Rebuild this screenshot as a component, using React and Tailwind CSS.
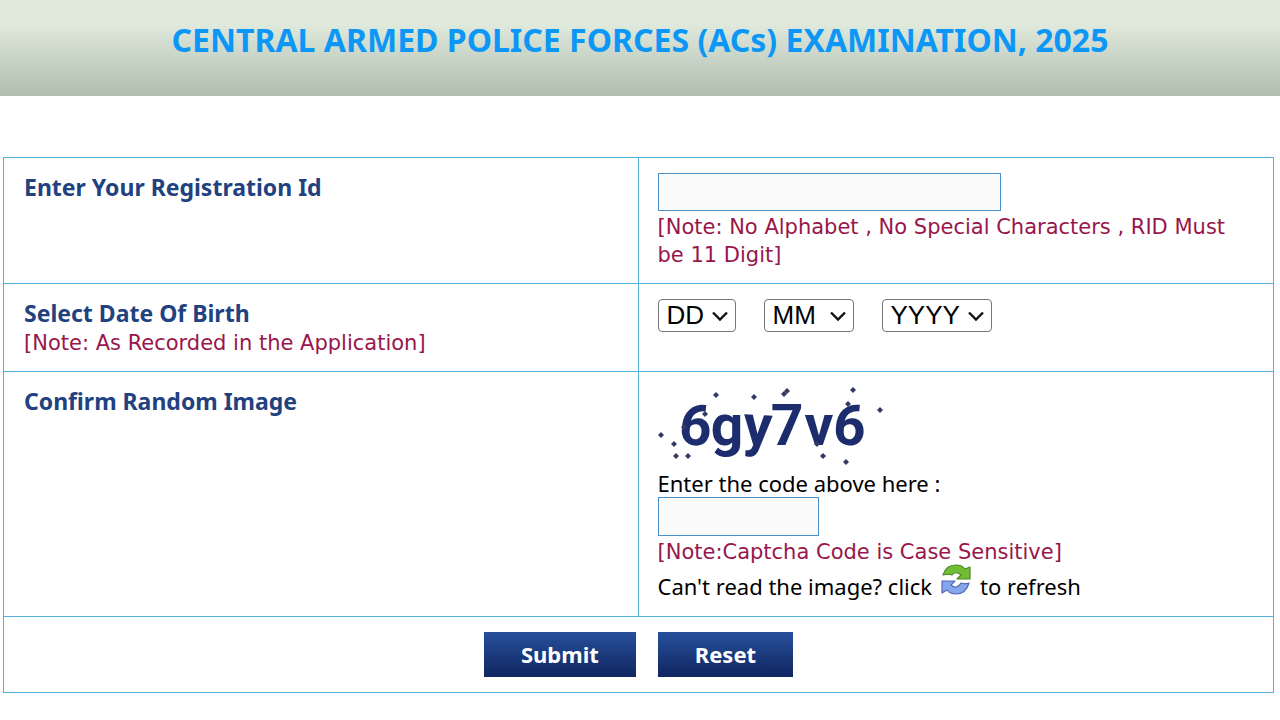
const DAYS = Array.from({ length: 31 }, (_, i) => String(i + 1).padStart(2, "0"));
const MONTHS = Array.from({ length: 12 }, (_, i) => String(i + 1).padStart(2, "0"));
const YEARS = Array.from({ length: 20 }, (_, i) => String(1990 + i));

const CAPTCHA_CHARS = [
  { char: "6", x: 38, angle: 6 },
  { char: "g", x: 69, angle: 0 },
  { char: "y", x: 100, angle: 3 },
  { char: "7", x: 129, angle: 0 },
  { char: "v", x: 161, angle: 0 },
  { char: "6", x: 192, angle: 5 },
];

const CAPTCHA_DOTS = [
  [3, 48], [16, 57], [18, 69], [30, 69], [26, 40], [47, 27], [58, 8], [96, 10],
  [126, 7], [129, 4], [159, 57], [165, 69], [195, 3], [222, 23], [188, 75], [190, 17],
];

function Note({ children }) {
  return (
    <p className="mt-px font-['DejaVu_Sans',sans-serif] text-[21px] leading-7 text-[#98164b]">
      {children}
    </p>
  );
}

function FieldRow({ children, htmlFor, label, note }) {
  return (
    <div className="grid grid-cols-2 border-b border-[#55b1dc]">
      <div className="border-r border-[#55b1dc] px-5 pb-3.5 pt-[15px]">
        <label className="block text-[23px] font-bold leading-[29px] text-[#21417f]" htmlFor={htmlFor}>
          {label}
        </label>
        {note ? <Note>{note}</Note> : null}
      </div>
      <div className="px-[19px] pb-3.5 pt-[15px]">{children}</div>
    </div>
  );
}

function DateSelect({ className, id, label, options, placeholder }) {
  return (
    <div className={`relative h-[33px] ${className}`}>
      <select
        aria-label={label}
        className="h-full w-full appearance-none rounded-[4px] border border-[#767676] bg-white pl-2 font-['Liberation_Sans',sans-serif] text-[26px] leading-[31px] text-black"
        defaultValue=""
        id={id}
      >
        <option value="">{placeholder}</option>
        {options.map((option) => (
          <option key={option} value={option}>{option}</option>
        ))}
      </select>
      <svg
        aria-hidden="true"
        className="pointer-events-none absolute right-2 top-3 h-[11px] w-4"
        fill="none"
        stroke="#111"
        strokeWidth="2.4"
        viewBox="0 0 16 11"
      >
        <path d="M1 1.5 8 8.5l7-7" />
      </svg>
    </div>
  );
}

function Captcha() {
  return (
    <svg aria-label="Random image" className="h-[82px] w-[230px]" role="img" viewBox="0 0 230 82">
      <g
        fill="#1c2c6c"
        fontFamily="Roboto, sans-serif"
        fontSize="57"
        fontWeight="700"
        textAnchor="middle"
      >
        {CAPTCHA_CHARS.map(({ angle, char, x }) => (
          <text key={x} transform={`rotate(${angle} ${x} 37)`} x={x} y="58">
            {char}
          </text>
        ))}
      </g>
      <g fill="#343b63">
        {CAPTCHA_DOTS.map(([x, y]) => (
          <path key={`${x}-${y}`} d={`M${x} ${y - 3}l3 3-3 3-3-3z`} />
        ))}
      </g>
    </svg>
  );
}

function RefreshIcon() {
  return (
    <svg aria-hidden="true" className="h-8 w-8" strokeLinejoin="round" viewBox="0 0 32 32">
      <path
        d="M3 11C5 4 10 1 16 1c4 0 7 1 9 4l5-2v12H17l4-4c-3-3-7-3-9 0-2-1-5-1-9 0z"
        fill="#73bd35"
        stroke="#468b22"
        strokeWidth="1.2"
      />
      <path
        d="M2 17h13l-4 4c3 3 7 3 10-2 3 1 5 1 8 0-2 7-7 11-13 11-4 0-7-1-9-4l-5 3z"
        fill="#86a7ee"
        stroke="#5269b5"
        strokeWidth="1.2"
      />
    </svg>
  );
}

function App() {
  return (
    <main className="min-h-screen bg-white font-['Noto_Sans',sans-serif] text-black">
      <header className="bg-linear-to-b from-[#dfe9dc] from-25% to-[#b0beb0] px-4 pb-9 pt-5">
        <h1 className="text-center text-[32px] font-bold leading-10 text-[#0c97f7]">
          CENTRAL ARMED POLICE FORCES (ACs) EXAMINATION, 2025
        </h1>
      </header>

      <form
        className="ml-[3px] mr-1.5 mt-[61px] border border-b-0 border-[#55b1dc]"
        onSubmit={(event) => event.preventDefault()}
      >
        <FieldRow htmlFor="registration" label="Enter Your Registration Id">
          <input
            className="mb-0.5 block h-[38px] w-[343px] border border-[#4a8fc7] bg-[#fafafa] px-2 text-[22px]"
            id="registration"
            type="text"
          />
          <Note>[Note: No Alphabet , No Special Characters , RID Must be 11 Digit]</Note>
        </FieldRow>

        <FieldRow
          htmlFor="day"
          label="Select Date Of Birth"
          note="[Note: As Recorded in the Application]"
        >
          <div className="flex gap-7">
            <DateSelect className="w-[78px]" id="day" label="Day" options={DAYS} placeholder="DD" />
            <DateSelect className="w-[90px]" id="month" label="Month" options={MONTHS} placeholder="MM" />
            <DateSelect className="w-[110px]" id="year" label="Year" options={YEARS} placeholder="YYYY" />
          </div>
        </FieldRow>

        <FieldRow htmlFor="captcha" label="Confirm Random Image">
          <Captcha />
          <p className="text-[22px] leading-7">Enter the code above here :</p>
          <input
            className="mb-0.5 block h-[39px] w-[161px] border border-[#4a8fc7] bg-[#fafafa] px-2 text-[22px]"
            id="captcha"
            type="text"
          />
          <Note>[Note:Captcha Code is Case Sensitive]</Note>
          <div className="mb-0.5 flex h-[34px] items-end gap-2 text-[22px]">
            <span className="leading-7">Can't read the image? click</span>
            <button aria-label="Refresh image" className="mb-1" type="button">
              <RefreshIcon />
            </button>
            <span className="leading-7">to refresh</span>
          </div>
        </FieldRow>

        <div className="flex justify-center gap-[22px] border-b border-[#55b1dc] py-[15px]">
          <button
            className="h-[45px] bg-linear-to-b from-[#27509b] to-[#102661] px-[37px] text-[22px] font-bold text-white"
            type="submit"
          >
            Submit
          </button>
          <button
            className="h-[45px] bg-linear-to-b from-[#27509b] to-[#102661] px-[37px] text-[22px] font-bold text-white"
            type="reset"
          >
            Reset
          </button>
        </div>
      </form>
    </main>
  );
}

export default App;
